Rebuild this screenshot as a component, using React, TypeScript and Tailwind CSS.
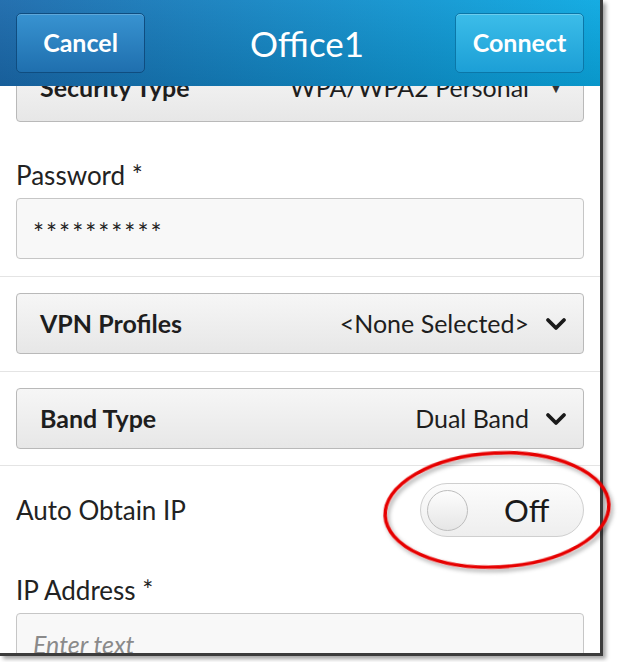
import React from "react";

const font = { fontFamily: "Lato, 'Open Sans', sans-serif" };

function Chevron() {
  return (
    <svg width="22" height="14" viewBox="0 0 22 14" className="shrink-0">
      <path d="M3 3 L11 11 L19 3" fill="none" stroke="#1a1a1a" strokeWidth="3.8" strokeLinecap="round" strokeLinejoin="round" />
    </svg>
  );
}

function SelectBox({ label, value, caret, className = "" }: { label: string; value: string; caret?: boolean; className?: string }) {
  return (
    <div
      className={`mx-[16px] h-[61px] rounded-[4px] border border-[#b9b9b9] bg-[linear-gradient(180deg,#f6f6f6,#e7e7e7)] flex items-center pl-[23px] pr-[16px] ${className}`}
    >
      <span className="text-[25px] font-bold text-[#1e1e1e] flex-1">{label}</span>
      <span className="text-[25px] text-[#1e1e1e] mr-[16px]">{value}</span>
      {caret ? <span className="text-[14px] text-[#333] w-[22px] text-center">▼</span> : <Chevron />}
    </div>
  );
}

function Divider({ className = "" }: { className?: string }) {
  return <div className={`h-px bg-[#e4e4e4] ${className}`} />;
}

export default function App() {
  return (
    <div className="relative w-[618px] h-[662px] bg-white overflow-hidden" style={font}>
      <div className="relative w-[603px] h-[656px] border-r-[3px] border-b-[3px] border-[#3c3c3c] shadow-[3px_3px_4px_rgba(0,0,0,0.35)] overflow-hidden flex flex-col bg-white">
        {/* title bar */}
        <div className="relative z-10 h-[86px] shrink-0 flex items-center justify-between px-[16px] bg-[linear-gradient(180deg,rgba(255,255,255,0.05),rgba(0,0,0,0.1)),linear-gradient(90deg,#1a69ab,#0aa8e1)]">
          <button className="w-[129px] h-[60px] rounded-[5px] border border-[#0f4d80] bg-[linear-gradient(180deg,#3893d1,#1f6fae)] shadow-[inset_0_1px_0_rgba(255,255,255,0.2)] text-white text-[25px] font-bold">
            Cancel
          </button>
          <div className="text-white text-[35px] font-normal pl-[14px]">Office1</div>
          <button className="w-[129px] h-[60px] rounded-[5px] border border-[#0b77a8] bg-[linear-gradient(180deg,#3cbde9,#1c9fd6)] shadow-[inset_0_1px_0_rgba(255,255,255,0.25)] text-white text-[25px] font-bold">
            Connect
          </button>
        </div>

        <div className="flex flex-col mt-[-25px]">
          <SelectBox label="Security Type" value="WPA/WPA2 Personal" caret className="pb-[8px]" />

          <div className="mt-[37px] px-[16px] text-[26px] leading-[32px] text-[#222]">Password *</div>
          <div className="mt-[7px] mx-[16px] h-[61px] rounded-[4px] border border-[#c6c6c6] bg-[#f8f8f8] flex items-center pt-[10px] pl-[16px] text-[26px] tracking-[2px] text-[#222]">
            **********
          </div>

          <Divider className="mt-[17px]" />
          <SelectBox label="VPN Profiles" value="<None Selected>" className="mt-[16px]" />
          <Divider className="mt-[17px]" />
          <SelectBox label="Band Type" value="Dual Band" className="mt-[16px]" />
          <Divider className="mt-[16px]" />

          <div className="mt-[17px] flex items-center justify-between pl-[16px] pr-[16px]">
            <span className="text-[26px] text-[#222]">Auto Obtain IP</span>
            <div className="relative w-[164px] h-[54px] rounded-full border border-[#cfcfcf] bg-[linear-gradient(180deg,#fcfcfc,#eeeeee)] flex items-center">
              <div className="ml-[6px] w-[41px] h-[41px] rounded-full border border-[#bdbdbd] bg-[linear-gradient(180deg,#fdfdfd,#e6e6e6)]" />
              <span className="ml-[36px] text-[31px] text-[#1a1a1a]">Off</span>
            </div>
          </div>

          <div className="mt-[37px] px-[16px] text-[26px] leading-[32px] text-[#222]">IP Address *</div>
          <div className="mt-[7px] mx-[16px] h-[61px] rounded-[4px] border border-[#c6c6c6] bg-[#f8f8f8] flex items-start pt-[12px] pl-[16px] text-[25px] italic text-[#8a8a8a]">
            Enter text
          </div>
        </div>
      </div>

      {/* red callout ellipse */}
      <svg className="absolute left-0 top-0 pointer-events-none" width="618" height="662">
        <defs>
          <filter id="sh" x="-20%" y="-20%" width="140%" height="140%">
            <feDropShadow dx="2" dy="3" stdDeviation="2" floodColor="#000" floodOpacity="0.35" />
          </filter>
        </defs>
        <ellipse cx="497" cy="510" rx="112" ry="57" transform="rotate(-3 497 510)" fill="none" stroke="#e60000" strokeWidth="3.5" filter="url(#sh)" />
      </svg>
    </div>
  );
}
